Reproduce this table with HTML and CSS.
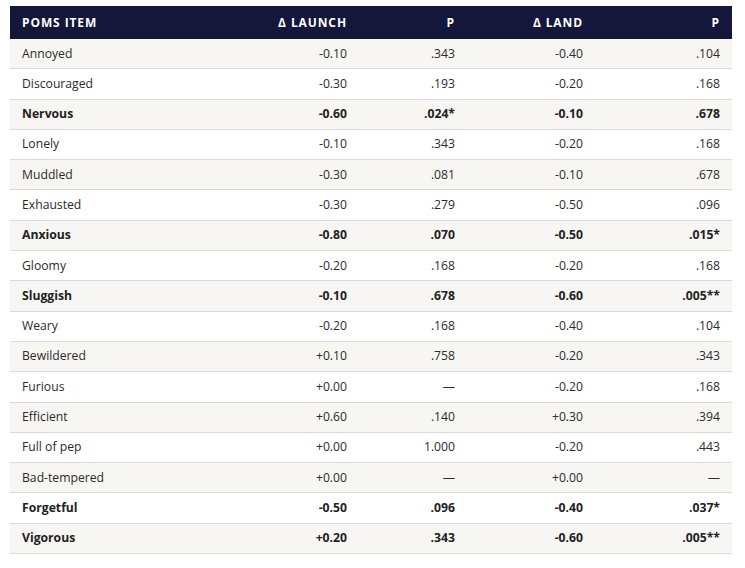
FILE: index.html
```html
<!DOCTYPE html>
<html>
<head>
<meta charset="utf-8">
<link rel="stylesheet" href="styles.css">
</head>
<body>
<table class="poms">
  <colgroup>
    <col class="c1"><col class="c2"><col class="c3"><col class="c4"><col class="c5">
  </colgroup>
  <thead>
    <tr><th class="l">POMS Item</th><th>Δ Launch</th><th>p</th><th>Δ Land</th><th>p</th></tr>
  </thead>
  <tbody>
    <tr><td class="l">Annoyed</td><td>-0.10</td><td>.343</td><td>-0.40</td><td>.104</td></tr>
    <tr><td class="l">Discouraged</td><td>-0.30</td><td>.193</td><td>-0.20</td><td>.168</td></tr>
    <tr class="sig"><td class="l">Nervous</td><td>-0.60</td><td>.024*</td><td>-0.10</td><td>.678</td></tr>
    <tr><td class="l">Lonely</td><td>-0.10</td><td>.343</td><td>-0.20</td><td>.168</td></tr>
    <tr><td class="l">Muddled</td><td>-0.30</td><td>.081</td><td>-0.10</td><td>.678</td></tr>
    <tr><td class="l">Exhausted</td><td>-0.30</td><td>.279</td><td>-0.50</td><td>.096</td></tr>
    <tr class="sig"><td class="l">Anxious</td><td>-0.80</td><td>.070</td><td>-0.50</td><td>.015*</td></tr>
    <tr><td class="l">Gloomy</td><td>-0.20</td><td>.168</td><td>-0.20</td><td>.168</td></tr>
    <tr class="sig"><td class="l">Sluggish</td><td>-0.10</td><td>.678</td><td>-0.60</td><td>.005**</td></tr>
    <tr><td class="l">Weary</td><td>-0.20</td><td>.168</td><td>-0.40</td><td>.104</td></tr>
    <tr><td class="l">Bewildered</td><td>+0.10</td><td>.758</td><td>-0.20</td><td>.343</td></tr>
    <tr><td class="l">Furious</td><td>+0.00</td><td>—</td><td>-0.20</td><td>.168</td></tr>
    <tr><td class="l">Efficient</td><td>+0.60</td><td>.140</td><td>+0.30</td><td>.394</td></tr>
    <tr><td class="l">Full of pep</td><td>+0.00</td><td>1.000</td><td>-0.20</td><td>.443</td></tr>
    <tr><td class="l">Bad-tempered</td><td>+0.00</td><td>—</td><td>+0.00</td><td>—</td></tr>
    <tr class="sig"><td class="l">Forgetful</td><td>-0.50</td><td>.096</td><td>-0.40</td><td>.037*</td></tr>
    <tr class="sig"><td class="l">Vigorous</td><td>+0.20</td><td>.343</td><td>-0.60</td><td>.005**</td></tr>
  </tbody>
</table>
</body>
</html>
```

FILE: styles.css
```css
html, body {
  background: #ffffff;
}
body {
  margin: 6px 10px;
  font-family: "Open Sans", "Noto Sans", "DejaVu Sans", sans-serif;
  font-size: 12.2px;
  color: #2b2b2b;
}
.poms {
  width: 722px;
  border-collapse: collapse;
  table-layout: fixed;
}
.c1 { width: 230px; }
.c2 { width: 119px; }
.c3 { width: 108px; }
.c4 { width: 128px; }
.c5 { width: 137px; }
.poms th {
  background: #14163a;
  color: #ffffff;
  font-weight: 700;
  font-size: 12px;
  letter-spacing: 0.9px;
  text-transform: uppercase;
  text-align: right;
  padding: 8px 12px 8px 12px;
  line-height: 17px;
  height: 17px;
}
.poms th.l, .poms td.l {
  text-align: left;
}
.poms td {
  text-align: right;
  padding: 6.5px 12px 6.5px 12px;
  line-height: 16.3px;
  border-bottom: 1px solid #dadada;
}
.poms tbody tr:nth-child(odd) td {
  background: #f7f6f2;
}
.poms tbody tr:nth-child(even) td {
  background: #ffffff;
}
.poms tr.sig td {
  font-weight: 700;
  color: #222222;
}
```
